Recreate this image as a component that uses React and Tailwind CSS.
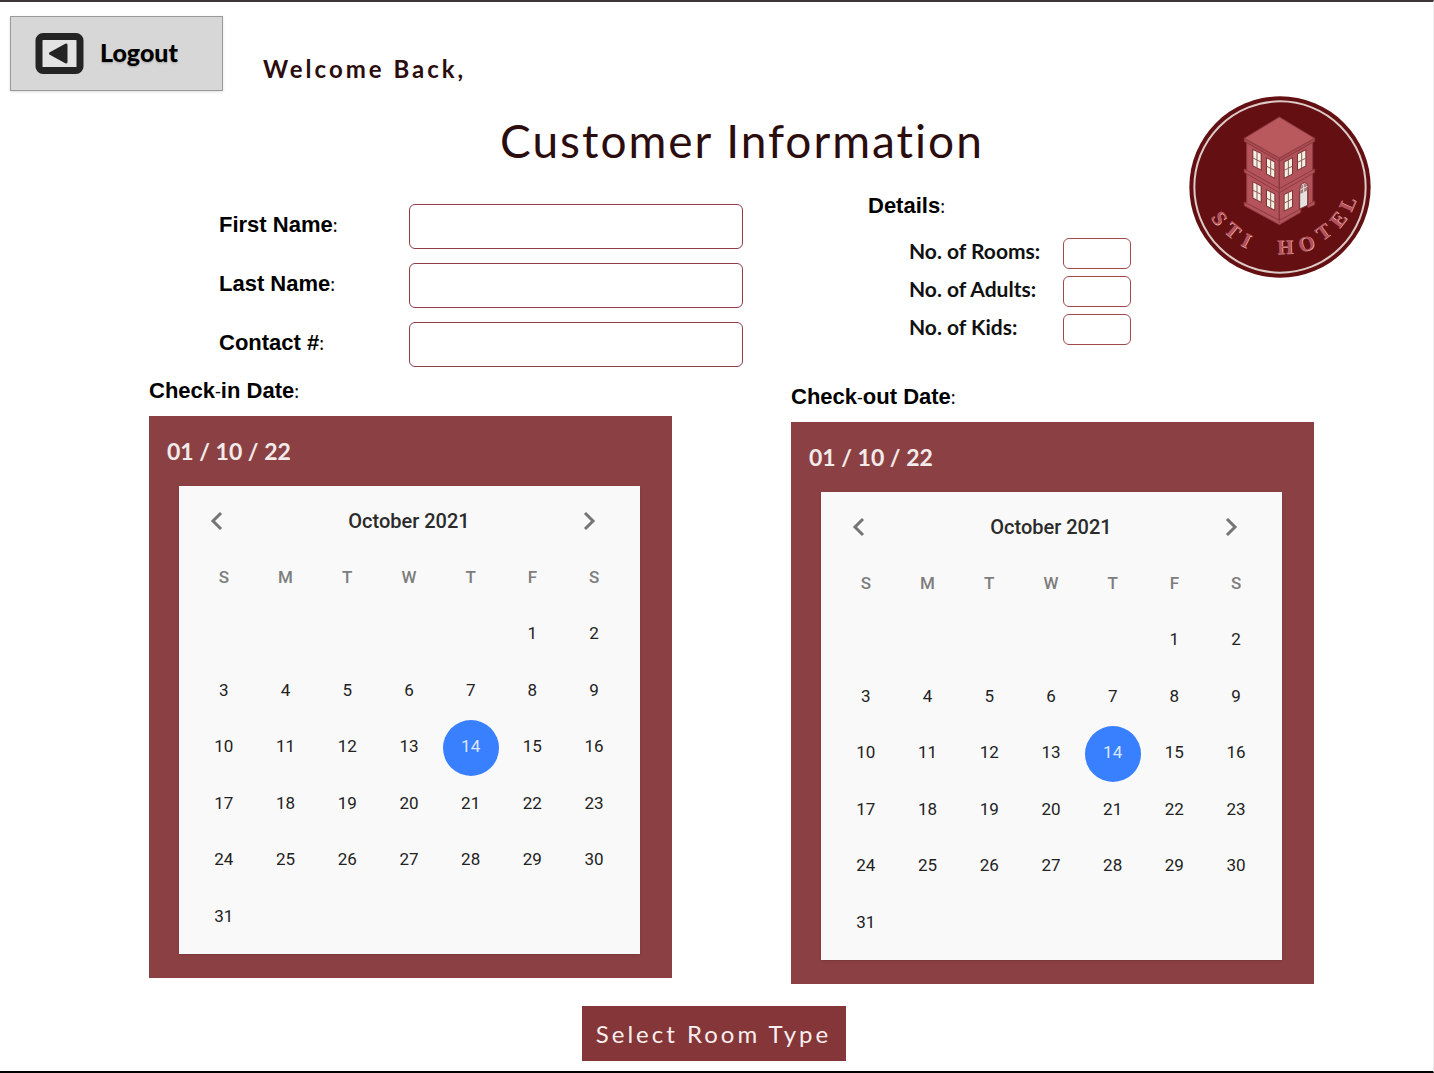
import React from "react";

const WEEKDAYS = ["S", "M", "T", "W", "T", "F", "S"];
const WEEKS = [
  [null, null, null, null, null, 1, 2],
  [3, 4, 5, 6, 7, 8, 9],
  [10, 11, 12, 13, 14, 15, 16],
  [17, 18, 19, 20, 21, 22, 23],
  [24, 25, 26, 27, 28, 29, 30],
  [31, null, null, null, null, null, null],
];

function BackIcon() {
  return (
    <svg viewBox="0 0 49 41" className="h-[41px] w-[49px]" aria-hidden="true">
      <rect x="4" y="3.5" width="41" height="34" rx="4" fill="#e3e3e3" stroke="#242424" strokeWidth="7" />
      <path d="M15.5 20.5 L31 12 V29 Z" fill="#242424" stroke="#242424" strokeWidth="3" strokeLinejoin="round" />
    </svg>
  );
}

// Letter, centre point and tilt along the lower rim of the badge.
const LETTERS = [
  ["S", 118, 385, 54],
  ["T", 158, 422, 40],
  ["I", 199, 452, 26],
  ["H", 315, 472, -2],
  ["O", 379, 462, -18],
  ["T", 430, 427, -36],
  ["E", 474, 390, -52],
  ["L", 502, 343, -66],
];

// Window with a cross bar, sheared along the wall; dir is 1 for the left wall, -1 for the right.
function Pane({ x, y, dir }) {
  return (
    <g transform={`matrix(1 ${dir * 0.5} 0 1 ${x} ${y})`}>
      <rect x="-2" y="-2" width="28" height="52" fill="#7c3338" />
      <rect x="1" y="1" width="22" height="46" fill="#f5f0e4" />
      <path d="M12 0V48M0 25H24" stroke="#8a5a55" strokeWidth="3" />
    </g>
  );
}

function Logo() {
  return (
    <svg viewBox="27 19 546 546" className="size-[182px] shrink-0" role="img" aria-label="STI Hotel">
      <circle cx="300" cy="292" r="272" fill="#641013" />
      <circle cx="300" cy="292" r="257" fill="none" stroke="#dccbc8" strokeWidth="6" />
      <g stroke="#8c3a40" strokeWidth="3" strokeLinejoin="round">
        <path d="M200 150L298 205V400L200 345Z" fill="#b4535a" />
        <path d="M398 150L298 205V400L358 366V306Q372 280 384 294V352L398 345Z" fill="#b25259" />
        <path d="M193 238L298 297L404 238V248L298 309L193 248Z" fill="#b4535a" />
        <path d="M193 337L298 392L362 358V368L298 405L193 348Z" fill="#b4535a" />
        <path d="M384 345L404 334V345L384 354Z" fill="#b4535a" />
        <path d="M193 145L298 203L404 145V155L298 215L193 155Z" fill="#a94a50" />
        <path d="M298 82L404 146L298 205L193 146Z" fill="#b9585d" />
        <path d="M298 205V400" fill="none" />
      </g>
      <Pane x={219} y={180} dir={1} />
      <Pane x={260} y={205} dir={1} />
      <Pane x={219} y={277} dir={1} />
      <Pane x={260} y={301} dir={1} />
      <Pane x={313} y={217} dir={-1} />
      <Pane x={353} y={193} dir={-1} />
      <Pane x={313} y={315} dir={-1} />
      <path d="M359 358V302Q362 280 374 279Q383 280 383 291V347Z" fill="#e4e2df" stroke="#7c3338" strokeWidth="3" />
      <path d="M361 313L382 302V291Q380 281 373 282Q363 286 361 300Z" fill="#a87a78" />
      <path d="M371 284V308M362 300L382 290" stroke="#e4e2df" strokeWidth="3" />
      <g fontFamily="'Liberation Serif', serif" fontWeight="700" fontSize="62" textAnchor="middle">
        {LETTERS.map(([ch, x, y, tilt], i) => (
          <g key={i} transform={`translate(${x} ${y}) rotate(${tilt})`}>
            <text x="2" y="22" fill="#e3b9b8">{ch}</text>
            <text x="0" y="20" fill="#b5505a">{ch}</text>
          </g>
        ))}
      </g>
    </svg>
  );
}

const labelFont = "font-['Liberation_Sans',sans-serif] text-[22px] leading-7 font-bold text-black";

function Thin({ children }) {
  return <span className="font-['Noto_Sans',sans-serif] text-lg leading-none font-normal">{children}</span>;
}

function Field({ id, label, type = "text" }) {
  return (
    <div className="grid grid-cols-[190px_1fr] items-center">
      <label htmlFor={id} className={`${labelFont} pb-1`}>
        {label}
        <Thin>:</Thin>
      </label>
      <input id={id} type={type} className="h-[45px] w-full min-w-0 rounded-md border border-[#8f3f43] bg-white px-3 text-lg" />
    </div>
  );
}

function CountField({ id, label }) {
  return (
    <div className="flex items-center justify-between pl-[41px]">
      <label htmlFor={id} className="pb-1.5 font-['Lato',sans-serif] text-[21px] leading-6 font-bold whitespace-nowrap text-[#111]">
        {label}
      </label>
      <input id={id} type="text" inputMode="numeric" className="h-[31px] w-[68px] rounded-md border border-[#a04a4e] bg-white px-2" />
    </div>
  );
}

function Chevron({ d }) {
  return (
    <svg viewBox="0 0 24 24" className="size-6" fill="none" stroke="#757575" strokeWidth="3" aria-hidden="true">
      <path d={d} />
    </svg>
  );
}

function Calendar({ label }) {
  return (
    <div className="bg-[#8b4143] pr-8 pb-6 pl-[30px] font-['Roboto',sans-serif]">
      <p className="-ml-3 flex h-[70px] items-center font-['Lato',sans-serif] text-[23px] leading-7 font-bold text-[#f3eaea]">01 / 10 / 22</p>
      <div className="bg-[#f9f9f9] pr-[15px] pb-2 pl-3.5 shadow-sm">
        <div className="grid h-[65px] grid-cols-[1fr_auto_1fr] items-center pt-1">
          <button type="button" aria-label="Previous month" className="ml-3 justify-self-start">
            <Chevron d="M16 4L8 12L16 20" />
          </button>
          <h2 className="text-xl leading-6 font-medium text-[#2b2b2b]">October 2021</h2>
          <button type="button" aria-label="Next month" className="mr-6 justify-self-end">
            <Chevron d="M8 4L16 12L8 20" />
          </button>
        </div>
        <table className="h-[395px] w-full table-fixed text-center text-[17px] leading-6" aria-label={label}>
          <thead>
            <tr>
              {WEEKDAYS.map((d, i) => (
                <th key={i} scope="col" className="h-14 p-0 pb-1 font-medium text-[#7d7d7d]">{d}</th>
              ))}
            </tr>
          </thead>
          <tbody>
            {WEEKS.map((week, i) => (
              <tr key={i}>
                {week.map((day, j) => (
                  <td key={j} className="p-0">
                    {day && (
                      <button
                        type="button"
                        className={
                          day === 14
                            ? "mx-auto block size-14 rounded-full bg-[#3880ff] pb-1 text-[#dbe7ff]"
                            : "mx-auto block size-14 rounded-full pb-1 text-[#222]"
                        }
                      >
                        {day}
                      </button>
                    )}
                  </td>
                ))}
              </tr>
            ))}
          </tbody>
        </table>
      </div>
    </div>
  );
}

export default function App() {
  return (
    <div className="min-h-screen border-t-2 border-r border-b-2 border-t-[#3d3638] border-r-[#eeeeee] border-b-black bg-white">
      <header className="flex items-end gap-10 pt-3.5 pb-[5px] pl-2.5">
        <button
          type="button"
          className="flex h-[75px] w-[213px] items-center gap-4 border border-[#9a9a9a] bg-[#d7d7d7] pl-6 font-['Lato',sans-serif] text-[25px] leading-7 font-black text-black shadow-sm text-shadow-sm"
        >
          <BackIcon />
          <span className="pb-1">Logout</span>
        </button>
        <p className="pb-2 font-['Lato',sans-serif] text-2xl leading-7 font-bold tracking-[3px] text-[#2c0d0e]">Welcome Back,</p>
      </header>

      <main>
        <form className="flex pr-[62px]">
          <div className="flex-1 pt-[21px] pr-[58px] pl-[219px]">
            <h1 className="pl-[134px] text-center font-['Lato',sans-serif] text-[46px] leading-[48px] tracking-[2px] text-[#2c0d0e]">
              Customer Information
            </h1>
            <div className="mt-[39px] grid grid-cols-[1fr_263px] items-start gap-[125px]">
              <div className="flex flex-col gap-3.5">
                <Field id="first-name" label="First Name" />
                <Field id="last-name" label="Last Name" />
                <Field id="contact" label="Contact #" type="tel" />
              </div>
              <fieldset className="-mt-3">
                <legend className={labelFont}>
                  Details<Thin>:</Thin>
                </legend>
                <div className="flex flex-col gap-[7px] pt-[18px]">
                  <CountField id="rooms" label="No. of Rooms:" />
                  <CountField id="adults" label="No. of Adults:" />
                  <CountField id="kids" label="No. of Kids:" />
                </div>
              </fieldset>
            </div>
          </div>
          <Logo />
        </form>

        <div className="grid grid-cols-2 gap-[119px] pt-2.5 pr-[119px] pl-[149px]">
          <section>
            <h2 className={`${labelFont} mb-[11px]`}>
              Check<Thin>-</Thin>in Date<Thin>:</Thin>
            </h2>
            <Calendar label="Check-in date" />
          </section>
          <section className="pt-1.5">
            <h2 className={`${labelFont} mb-[11px]`}>
              Check<Thin>-</Thin>out Date<Thin>:</Thin>
            </h2>
            <Calendar label="Check-out date" />
          </section>
        </div>

        <div className="flex justify-center pt-[22px] pr-1.5 pb-2.5">
          <button
            type="button"
            className="h-[55px] w-[264px] bg-[#853638] font-['Lato',sans-serif] text-2xl leading-7 tracking-[3px] whitespace-nowrap text-[#f8eeee]"
          >
            Select Room Type
          </button>
        </div>
      </main>
    </div>
  );
}
